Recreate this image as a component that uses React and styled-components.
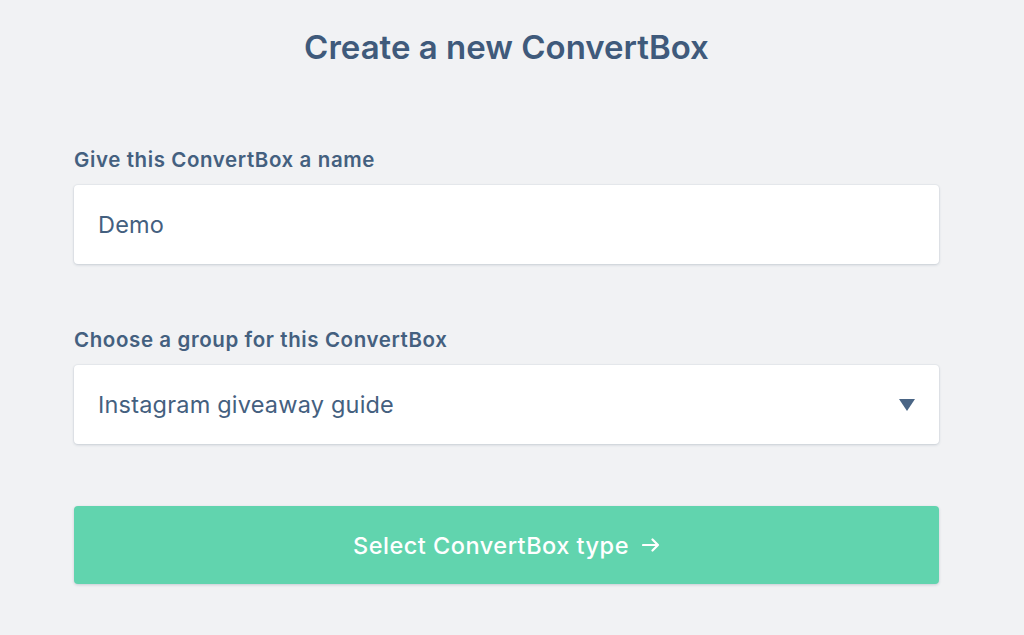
import React, { useState } from "react";
import styled, { createGlobalStyle } from "styled-components";

const GlobalStyle = createGlobalStyle`
  html, body {
    margin: 0;
    padding: 0;
    background: #f1f2f4;
  }
  body {
    font-family: Inter, "Noto Sans", "Liberation Sans", sans-serif;
    -webkit-font-smoothing: antialiased;
  }
`;

const Page = styled.div`
  min-height: 635px;
  background: #f1f2f4;
  padding: 27px 85px 0 74px;
  box-sizing: border-box;
`;

const Title = styled.h1`
  margin: 0;
  text-align: center;
  font-size: 33px;
  line-height: 40px;
  font-weight: 600;
  color: #3f5a7b;
`;

const Form = styled.form`
  display: flex;
  flex-direction: column;
  margin-top: 79px;
`;

const Field = styled.div`
  display: flex;
  flex-direction: column;
  margin-bottom: ${({ $gap }) => $gap}px;
`;

const Label = styled.label`
  font-size: 20.5px;
  line-height: 28px;
  font-weight: 600;
  letter-spacing: 0.6px;
  color: #44607f;
  margin-bottom: 11px;
`;

const Box = styled.div`
  position: relative;
  height: 79px;
  background: #fff;
  border-radius: 4px;
  box-shadow: 0 1px 3px rgba(40, 60, 90, 0.18), 0 0 0 1px rgba(40, 60, 90, 0.03);
  display: flex;
  align-items: center;
  padding: 0 24px;
  box-sizing: border-box;
`;

const Input = styled.input`
  border: none;
  outline: none;
  background: transparent;
  width: 100%;
  font-family: inherit;
  font-size: 23.5px;
  letter-spacing: 0.2px;
  color: #44607f;
  padding: 0;
`;

const Select = styled.select`
  appearance: none;
  border: none;
  outline: none;
  background: transparent;
  width: 100%;
  height: 100%;
  font-family: inherit;
  font-size: 23.5px;
  letter-spacing: 0.2px;
  color: #44607f;
  padding: 0;
  cursor: pointer;
`;

const Caret = styled.span`
  position: absolute;
  right: 24px;
  top: 50%;
  transform: translateY(-50%);
  width: 0;
  height: 0;
  border-left: 8px solid transparent;
  border-right: 8px solid transparent;
  border-top: 12px solid #4a6585;
  pointer-events: none;
`;

const Button = styled.button`
  height: 78px;
  border: none;
  border-radius: 4px;
  background: #61d4ae;
  box-shadow: 0 1px 3px rgba(40, 60, 90, 0.2);
  color: #fff;
  font-family: inherit;
  font-size: 23.5px;
  font-weight: 500;
  letter-spacing: 0.5px;
  display: flex;
  align-items: center;
  justify-content: center;
  gap: 13px;
  cursor: pointer;
`;

const Arrow = () => (
  <svg width="18" height="14" viewBox="0 0 18 14" fill="none">
    <path d="M1 7h15M10.5 1.5 16 7l-5.5 5.5" stroke="#fff" strokeWidth="2.2" strokeLinecap="round" strokeLinejoin="round" />
  </svg>
);

const App = () => {
  const [name, setName] = useState("Demo");
  const [group, setGroup] = useState("instagram");

  return (
    <Page>
      <GlobalStyle />
      <Title>Create a new ConvertBox</Title>
      <Form onSubmit={(e) => e.preventDefault()}>
        <Field $gap={62}>
          <Label htmlFor="cb-name">Give this ConvertBox a name</Label>
          <Box>
            <Input id="cb-name" value={name} onChange={(e) => setName(e.target.value)} />
          </Box>
        </Field>
        <Field $gap={62}>
          <Label htmlFor="cb-group">Choose a group for this ConvertBox</Label>
          <Box>
            <Select id="cb-group" value={group} onChange={(e) => setGroup(e.target.value)}>
              <option value="instagram">Instagram giveaway guide</option>
            </Select>
            <Caret />
          </Box>
        </Field>
        <Button type="submit">
          Select ConvertBox type <Arrow />
        </Button>
      </Form>
    </Page>
  );
};

export default App;
